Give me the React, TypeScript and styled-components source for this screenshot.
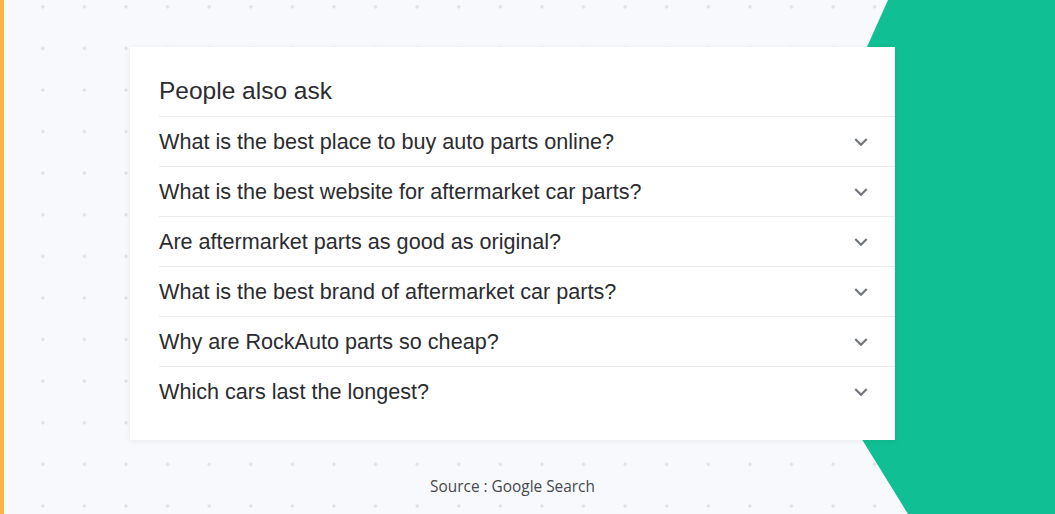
import React from 'react';
import styled, { createGlobalStyle } from 'styled-components';

const GlobalStyle = createGlobalStyle`
  html, body {
    margin: 0;
    padding: 0;
    background: #f7f9fc;
  }
  * {
    box-sizing: border-box;
  }
`;

const Page = styled.div`
  position: relative;
  width: 1055px;
  height: 514px;
  overflow: hidden;
  border-left: 4px solid #fbb441;
  background-color: #f7f9fc;
  background-image: radial-gradient(circle, #dde1e7 1.4px, transparent 1.9px);
  background-size: 41.6px 41.6px;
  background-position: 18px -14px;
  display: flex;
  flex-direction: column;
  align-items: flex-start;
  padding: 47px 0 0 126px;
`;

const Backdrop = styled.svg`
  position: absolute;
  left: -4px;
  top: 0;
  width: 1055px;
  height: 514px;
  pointer-events: none;
`;

const Card = styled.section`
  position: relative;
  z-index: 1;
  width: 765px;
  background: #ffffff;
  box-shadow: 0 1px 6px rgba(32, 33, 36, 0.07);
  padding: 0 0 24px 29px;
  font-family: 'Liberation Sans', Arial, sans-serif;
  color: #2b2c2f;
`;

const Title = styled.h2`
  margin: 0;
  height: 69px;
  display: flex;
  align-items: center;
  padding-top: 18px;
  font-size: 24.5px;
  font-weight: 400;
`;

const Row = styled.div`
  height: 50px;
  display: flex;
  align-items: center;
  justify-content: space-between;
  border-top: 1px solid #ebebeb;
  padding-right: 21px;
  font-size: 21.6px;
  cursor: pointer;
`;

const Chevron = styled.svg`
  width: 26px;
  height: 26px;
  fill: #70757a;
  flex-shrink: 0;
`;

const Footer = styled.p`
  position: relative;
  z-index: 1;
  width: 765px;
  margin: 36px 0 0;
  text-align: center;
  font-family: 'Open Sans', Lato, sans-serif;
  font-size: 15.4px;
  font-weight: 500;
  color: #45484d;
`;

const questions = [
  'What is the best place to buy auto parts online?',
  'What is the best website for aftermarket car parts?',
  'Are aftermarket parts as good as original?',
  'What is the best brand of aftermarket car parts?',
  'Why are RockAuto parts so cheap?',
  'Which cars last the longest?',
];

const App: React.FC = () => (
  <>
    <GlobalStyle />
    <Page>
      <Backdrop viewBox="0 0 1055 514">
        <polygon points="888,0 1055,0 1055,514 908,514 763,279" fill="#10bf93" />
      </Backdrop>
      <Card>
        <Title>People also ask</Title>
        {questions.map((q) => (
          <Row key={q}>
            <span>{q}</span>
            <Chevron viewBox="0 0 24 24">
              <path d="M16.59 8.59L12 13.17 7.41 8.59 6 10l6 6 6-6z" />
            </Chevron>
          </Row>
        ))}
      </Card>
      <Footer>Source : Google Search</Footer>
    </Page>
  </>
);

export default App;
